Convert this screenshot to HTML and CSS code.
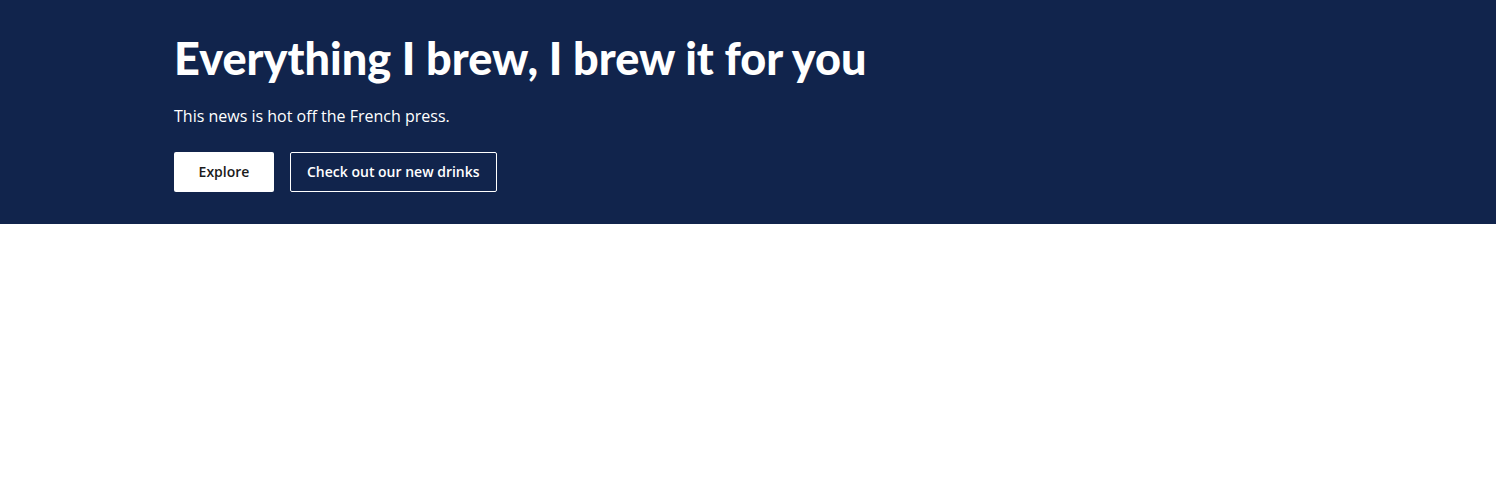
FILE: index.html
```html
<!DOCTYPE html>
<html lang="en">
<head>
<meta charset="utf-8">
<title>Everything I brew</title>
<link rel="stylesheet" href="styles.css">
</head>
<body>
<section class="hero">
  <div class="hero-inner">
    <h1 class="hero-title">Everything I brew, I brew it for you</h1>
    <p class="hero-text">This news is hot off the French press.</p>
    <div class="hero-actions">
      <a class="btn btn-solid" href="#">Explore</a>
      <a class="btn btn-outline" href="#">Check out our new drinks</a>
    </div>
  </div>
</section>
</body>
</html>
```
FILE: styles.css
```css
* { box-sizing: border-box; }
html, body { margin: 0; padding: 0; background: #ffffff; }
body { font-family: "Open Sans", "Noto Sans", sans-serif; }
.hero { background: #11244c; color: #ffffff; }
.hero-inner {
  max-width: 1148px;
  margin: 0 auto;
  padding: 30px 0 32px;
}
.hero-title {
  margin: 0;
  font-family: "Lato", "Noto Sans", sans-serif;
  font-weight: 900;
  font-size: 45px;
  line-height: 56px;
  letter-spacing: 0;
}
.hero-text {
  margin: 18px 0 0;
  font-size: 16px;
  line-height: 24px;
}
.hero-actions {
  display: flex;
  gap: 16px;
  margin-top: 24px;
}
.btn {
  display: inline-flex;
  align-items: center;
  justify-content: center;
  height: 40px;
  padding: 0 16px 1px;
  font-size: 14px;
  font-weight: 600;
  text-decoration: none;
  border-radius: 2px;
}
.btn-solid { width: 100px; background: #ffffff; color: #1b1b1b; }
.btn-outline { border: 1px solid #ffffff; color: #ffffff; }
```
